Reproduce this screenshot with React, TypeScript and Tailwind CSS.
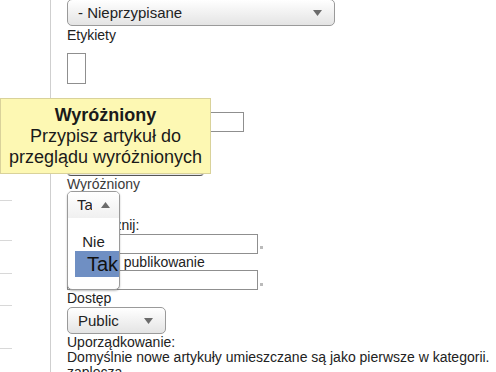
import React from "react";

function Caret({ up = false }: { up?: boolean }) {
  return (
    <svg width="9" height="6" viewBox="0 0 9 6" className="shrink-0">
      {up ? <path d="M0 6 L4.5 0 L9 6 Z" fill="#6b6b6b" /> : <path d="M0 0 L9 0 L4.5 6 Z" fill="#6b6b6b" />}
    </svg>
  );
}

function Select({ label, width, pad = "pl-[10px] pr-[12px]" }: { label: string; width: string; pad?: string }) {
  return (
    <div
      className={`${width} ${pad} h-[27px] flex items-center justify-between rounded-[5px] border border-[#9a9a9a] bg-gradient-to-b from-white to-[#e4e4e4] text-[15px] text-[#222]`}
    >
      <span>{label}</span>
      <Caret />
    </div>
  );
}

export default function App() {
  const sideLines = [200, 240, 273, 305, 348];

  return (
    <div
      className="relative w-[496px] h-[372px] overflow-hidden bg-white flex text-[#222]"
      style={{ fontFamily: '"Liberation Sans", Arial, sans-serif' }}
    >
      {/* left rail */}
      <div className="relative w-[51px] shrink-0 border-r border-[#cfcfcf]">
        {sideLines.map((y) => (
          <div key={y} className="absolute left-0 w-[12px] h-px bg-[#d8d8d8]" style={{ top: y }} />
        ))}
      </div>

      {/* form column */}
      <div className="pl-[16px] text-[14px] leading-[16px] whitespace-nowrap">
        <div className="-mt-[1px]">
          <Select label="- Nieprzypisane" width="w-[268px]" />
        </div>
        <div className="mt-[1px]">Etykiety</div>
        <div className="mt-[10px] w-[19px] h-[31px] border border-[#8f8f8f] bg-white" />

        <div className="mt-[14px] leading-[14px]">Język</div>
        <div className="w-[177px] h-[20px] border border-[#8f8f8f]" />
        <div className="mt-[2px]">Wyróżnij</div>
        <div className="mt-[2px] w-[137px] h-[24px] rounded-[4px] border border-[#9a9a9a] border-b-[#555] bg-[#e8e8e8]" />

        <div className="text-[#3a3a3a]">Wyróżniony</div>
        <div className="h-[25px]" />
        <div>Rozpocznij:</div>
        <div className="mt-[1px] flex items-end gap-[2px]">
          <div className="w-[191px] h-[20px] border border-[#8f8f8f]" />
          <div className="w-[3px] h-[3px] bg-[#bbb] mb-[5px]" />
        </div>
        <div>Zakończ publikowanie</div>
        <div className="flex items-end gap-[2px]">
          <div className="w-[191px] h-[20px] border border-[#8f8f8f]" />
          <div className="w-[3px] h-[3px] bg-[#bbb] mb-[4px]" />
        </div>
        <div>Dostęp</div>
        <div className="mt-[1px]">
          <Select label="Public" width="w-[99px]" />
        </div>
        <div className="mt-[1px] leading-[15px]">Uporządkowanie:</div>
        <div className="leading-[15px]">Domyślnie nowe artykuły umieszczane są jako pierwsze w kategorii.</div>
        <div className="leading-[15px]">zaplecza</div>
      </div>

      {/* open select list */}
      <div className="absolute left-[67px] top-[191px] w-[53px] h-[99px] rounded-[5px] border border-[#9a9a9a] bg-white shadow-[0_1px_2px_rgba(0,0,0,0.25)] overflow-hidden">
        <div className="flex items-center h-[26px] pl-[9px] pr-[8px] gap-[9px] bg-gradient-to-b from-white to-[#f0f0f0]">
          <span className="w-[15px] overflow-hidden text-[15px]">Tak</span>
          <Caret up />
        </div>
        <div className="mt-[16px] text-center text-[15px] leading-[16px]">Nie</div>
        <div className="mt-[1px] ml-[7px] h-[26px] bg-[#6f8fc3] flex items-center justify-end pr-[1px] text-[20px] text-[#111]">
          Tak
        </div>
      </div>

      {/* tooltip */}
      <div className="absolute left-0 top-[98px] w-[211px] h-[76px] border border-[#d9d29a] bg-[#fdf8b3] flex flex-col items-center justify-center text-[18px] leading-[21px] text-[#1a1a1a]">
        <div className="font-bold">Wyróżniony</div>
        <div>Przypisz artykuł do</div>
        <div>przeglądu wyróżnionych</div>
      </div>
    </div>
  );
}
